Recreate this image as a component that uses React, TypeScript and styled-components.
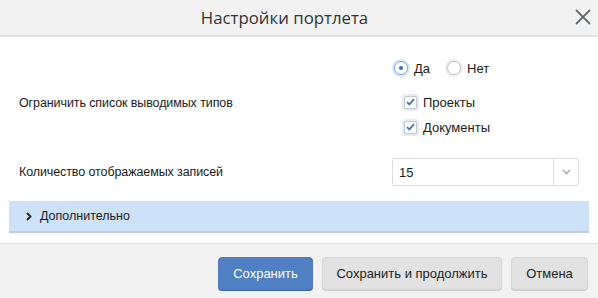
import React, { useState } from "react";
import styled, { createGlobalStyle } from "styled-components";

const GlobalStyle = createGlobalStyle`
  html, body {
    margin: 0;
    padding: 0;
    background: #ffffff;
  }
  body {
    font-family: "Liberation Sans", Arial, sans-serif;
    font-size: 13px;
    color: #1b1b1b;
  }
`;

const Dialog = styled.div`
  width: 598px;
  height: 298px;
  display: flex;
  flex-direction: column;
  background: #fff;
  box-sizing: border-box;
`;

const Header = styled.div`
  height: 35px;
  flex: none;
  display: flex;
  align-items: center;
  justify-content: center;
  position: relative;
  background: #f2f2f2;
  border-bottom: 2px solid #e2e2e2;
`;

const Title = styled.div`
  font-family: "Open Sans", "Noto Sans", sans-serif;
  font-size: 16.8px;
  color: #333;
  margin-left: -29px;
`;

const CloseButton = styled.button`
  position: absolute;
  right: 7px;
  top: 9px;
  width: 16px;
  height: 16px;
  padding: 0;
  border: 0;
  background: transparent;
  cursor: pointer;
  display: flex;
`;

const Body = styled.div`
  flex: 1;
  display: flex;
  flex-direction: column;
  padding: 22px 9px 0 9px;
`;

const Row = styled.div<{ $top?: number }>`
  display: grid;
  grid-template-columns: 373px 1fr;
  align-items: start;
  padding-left: 10px;
  margin-top: ${(p) => p.$top ?? 0}px;
`;

const Label = styled.div<{ $h: number }>`
  height: ${(p) => p.$h}px;
  line-height: ${(p) => p.$h}px;
  font-size: 12.5px;
  letter-spacing: -0.1px;
`;

const RadioGroup = styled.div`
  display: flex;
  align-items: center;
  gap: 15px;
`;

const Option = styled.label<{ $indent?: number }>`
  display: flex;
  align-items: center;
  gap: 4px;
  height: 18px;
  margin-left: ${(p) => p.$indent ?? 0}px;
  cursor: pointer;
  font-size: 13px;
`;

const RadioHalo = styled.span<{ $on: boolean }>`
  width: 18px;
  height: 18px;
  border-radius: 50%;
  background: ${(p) => (p.$on ? "#dbe7f8" : "#e9edf3")};
  display: flex;
  align-items: center;
  justify-content: center;
`;

const RadioRing = styled.span<{ $on: boolean }>`
  width: 12px;
  height: 12px;
  border-radius: 50%;
  background: #fff;
  border: 1px solid ${(p) => (p.$on ? "#7fa4d6" : "#c4c4c4")};
  display: flex;
  align-items: center;
  justify-content: center;
`;

const RadioDot = styled.span`
  width: 4px;
  height: 4px;
  border-radius: 50%;
  background: #3d6db5;
`;

const CheckList = styled.div`
  display: flex;
  flex-direction: column;
  gap: 7px;
  margin-top: -1px;
`;

const CheckHalo = styled.span`
  width: 17px;
  height: 17px;
  border-radius: 4px;
  background: #e6ecf5;
  display: flex;
  align-items: center;
  justify-content: center;
`;

const CheckBox = styled.span`
  width: 11px;
  height: 11px;
  border-radius: 2px;
  background: #fff;
  border: 1px solid #c3c7cd;
  display: flex;
  align-items: center;
  justify-content: center;
`;

const Select = styled.div`
  width: 187px;
  height: 28px;
  box-sizing: border-box;
  border: 1px solid #dcdcdc;
  border-radius: 2px;
  display: flex;
  align-items: stretch;
  background: #fff;
`;

const SelectValue = styled.div`
  flex: 1;
  display: flex;
  align-items: center;
  padding-left: 6px;
  font-size: 13px;
`;

const SelectArrow = styled.div`
  width: 24px;
  border-left: 1px solid #dcdcdc;
  display: flex;
  align-items: center;
  justify-content: center;
`;

const Accordion = styled.div`
  margin-top: 15px;
  height: 30px;
  background: #cde1f9;
  border-bottom: 2px solid #b9cce3;
  display: flex;
  align-items: center;
  gap: 8px;
  padding-left: 17px;
  font-size: 12.5px;
  cursor: pointer;
`;

const Footer = styled.div`
  flex: none;
  height: 55px;
  margin-top: auto;
  background: #f2f2f2;
  border-top: 1px solid #e2e2e2;
  display: flex;
  justify-content: flex-end;
  align-items: flex-start;
  gap: 9px;
  padding: 13px 10px 0 0;
  box-sizing: border-box;
`;

const Button = styled.button<{ $primary?: boolean; $w: number }>`
  width: ${(p) => p.$w}px;
  height: 33px;
  border-radius: 4px;
  font-family: "Liberation Sans", Arial, sans-serif;
  font-size: 13px;
  cursor: pointer;
  padding: 0;
  border: 1px solid ${(p) => (p.$primary ? "#4a7bc0" : "#d6d6d6")};
  background: ${(p) => (p.$primary ? "#4e80c3" : "#e2e2e2")};
  color: ${(p) => (p.$primary ? "#ffffff" : "#222")};
  box-shadow: 0 1px 0 ${(p) => (p.$primary ? "#3f6aa6" : "#cfcfcf")};
`;

const CheckMark = () => (
  <svg width="9" height="8" viewBox="0 0 9 8">
    <path d="M1 4.2 L3.4 6.4 L8 1.2" fill="none" stroke="#3f73c2" strokeWidth="1.8" />
  </svg>
);

const Radio = ({ on, label, onPick }: { on: boolean; label: string; onPick: () => void }) => (
  <Option onClick={onPick}>
    <RadioHalo $on={on}>
      <RadioRing $on={on}>{on && <RadioDot />}</RadioRing>
    </RadioHalo>
    {label}
  </Option>
);

const Check = ({ label }: { label: string }) => (
  <Option $indent={10}>
    <CheckHalo>
      <CheckBox>
        <CheckMark />
      </CheckBox>
    </CheckHalo>
    {label}
  </Option>
);

export default function App() {
  const [limit, setLimit] = useState(true);

  return (
    <>
      <GlobalStyle />
      <Dialog>
        <Header>
          <Title>Настройки портлета</Title>
          <CloseButton aria-label="Закрыть">
            <svg width="16" height="16" viewBox="0 0 16 16">
              <path d="M1 1 L15 15 M15 1 L1 15" stroke="#666b70" strokeWidth="1.8" />
            </svg>
          </CloseButton>
        </Header>
        <Body>
          <Row>
            <div />
            <RadioGroup>
              <Radio on={limit} label="Да" onPick={() => setLimit(true)} />
              <Radio on={!limit} label="Нет" onPick={() => setLimit(false)} />
            </RadioGroup>
          </Row>
          <Row $top={17}>
            <Label $h={18}>Ограничить список выводимых типов</Label>
            <CheckList>
              <Check label="Проекты" />
              <Check label="Документы" />
            </CheckList>
          </Row>
          <Row $top={22}>
            <Label $h={28}>Количество отображаемых записей</Label>
            <Select>
              <SelectValue>15</SelectValue>
              <SelectArrow>
                <svg width="9" height="6" viewBox="0 0 9 6">
                  <path d="M1 1 L4.5 4.5 L8 1" fill="none" stroke="#a8acb1" strokeWidth="1.6" />
                </svg>
              </SelectArrow>
            </Select>
          </Row>
          <Accordion>
            <svg width="6" height="9" viewBox="0 0 6 9">
              <path d="M1 1 L4.5 4.5 L1 8" fill="none" stroke="#222" strokeWidth="1.8" />
            </svg>
            Дополнительно
          </Accordion>
        </Body>
        <Footer>
          <Button $primary $w={95}>Сохранить</Button>
          <Button $w={180}>Сохранить и продолжить</Button>
          <Button $w={77}>Отмена</Button>
        </Footer>
      </Dialog>
    </>
  );
}
